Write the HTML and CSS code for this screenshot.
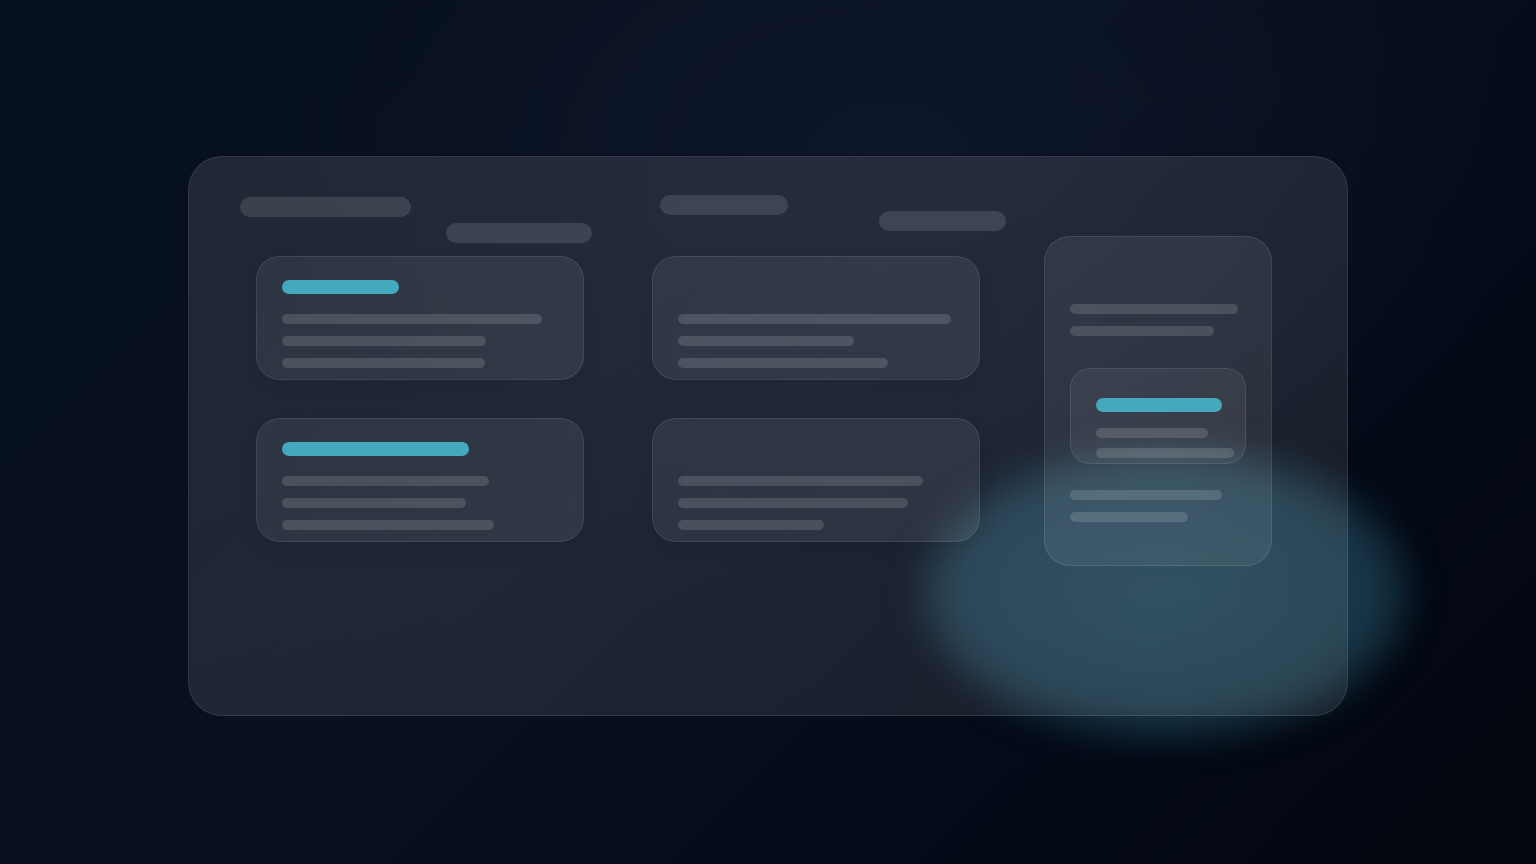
FILE: index.html
```html
<!DOCTYPE html>
<html lang="en">
<head>
<meta charset="utf-8">
<title>Dashboard skeleton</title>
<link rel="stylesheet" href="styles.css">
</head>
<body>
<div class="stage">
  <div class="glow"></div>
  <div class="panel">
    <div class="main-col">
      <div class="header">
        <span class="hbar hb1"></span>
        <span class="hbar hb2"></span>
        <span class="hbar hb3"></span>
        <span class="hbar hb4"></span>
      </div>
      <div class="cards">
        <div class="card">
          <span class="accent" style="width:117px"></span>
          <span class="line" style="width:260px"></span>
          <span class="line" style="width:204px"></span>
          <span class="line" style="width:203px"></span>
        </div>
        <div class="card">
          <span class="accent blank" style="width:117px"></span>
          <span class="line" style="width:273px"></span>
          <span class="line" style="width:176px"></span>
          <span class="line" style="width:210px"></span>
        </div>
        <div class="card">
          <span class="accent" style="width:187px"></span>
          <span class="line" style="width:207px"></span>
          <span class="line" style="width:184px"></span>
          <span class="line" style="width:212px"></span>
        </div>
        <div class="card">
          <span class="accent blank" style="width:117px"></span>
          <span class="line" style="width:245px"></span>
          <span class="line" style="width:230px"></span>
          <span class="line" style="width:146px"></span>
        </div>
      </div>
    </div>
    <aside class="side">
      <span class="line" style="width:168px"></span>
      <span class="line" style="width:144px"></span>
      <div class="inner">
        <span class="accent" style="width:126px"></span>
        <span class="line" style="width:112px"></span>
        <span class="line" style="width:138px"></span>
      </div>
      <span class="line" style="width:152px"></span>
      <span class="line" style="width:118px"></span>
    </aside>
  </div>
</div>
</body>
</html>
```
FILE: styles.css
```css
* { box-sizing: border-box; }

html, body {
  margin: 0;
  height: 100%;
}

body {
  font-family: "Inter", "Liberation Sans", sans-serif;
  background:
    radial-gradient(ellipse 900px 600px at 58% 18%, rgba(14, 22, 42, 0.9), rgba(14, 22, 42, 0) 70%),
    linear-gradient(135deg, #07101e 0%, #081022 45%, #040a17 75%, #02060e 100%);
  overflow: hidden;
}

.stage {
  position: relative;
  width: 1536px;
  height: 864px;
  padding: 156px 0 0 188px;
}

.glow {
  position: absolute;
  left: 925px;
  top: 450px;
  width: 480px;
  height: 285px;
  border-radius: 50%;
  background: radial-gradient(ellipse at 50% 50%, rgba(46, 100, 122, 0.6) 0%, rgba(42, 94, 116, 0.55) 55%, rgba(36, 86, 106, 0.4) 80%, rgba(30, 80, 100, 0) 100%);
  filter: blur(18px);
}

.panel {
  position: relative;
  width: 1160px;
  height: 560px;
  border-radius: 34px;
  border: 1px solid rgba(255, 255, 255, 0.09);
  background: linear-gradient(160deg, rgba(255, 255, 255, 0.1) 0%, rgba(255, 255, 255, 0.095) 50%, rgba(255, 255, 255, 0.085) 100%);
  display: flex;
  align-items: flex-start;
}

.main-col {
  width: 792px;
  flex-shrink: 0;
  padding-top: 38px;
}

.header {
  display: flex;
  align-items: flex-start;
  height: 48px;
}

.hbar {
  flex-shrink: 0;
  display: block;
  height: 20px;
  border-radius: 10px;
  background: rgba(255, 255, 255, 0.12);
}

.hb1 { width: 171px; margin-left: 51px; margin-top: 2px; }
.hb2 { width: 146px; margin-left: 35px; margin-top: 28px; }
.hb3 { width: 128px; margin-left: 68px; margin-top: 0; }
.hb4 { width: 127px; margin-left: 91px; margin-top: 16px; }

.cards {
  margin-top: 13px;
  margin-left: 67px;
  display: grid;
  grid-template-columns: 328px 328px;
  grid-auto-rows: 124px;
  column-gap: 68px;
  row-gap: 38px;
}

.card {
  display: flex;
  flex-direction: column;
  align-items: flex-start;
  gap: 12px;
  padding: 23px 25px 0;
  border-radius: 24px;
  border: 1px solid rgba(255, 255, 255, 0.09);
  background: linear-gradient(120deg, rgba(255, 255, 255, 0.065), rgba(255, 255, 255, 0.08));
  box-shadow: 0 6px 18px rgba(0, 0, 0, 0.08);
}

.accent {
  flex-shrink: 0;
  display: block;
  height: 14px;
  border-radius: 7px;
  background: #44a9bc;
  margin-bottom: 8px;
}

.accent.blank { background: transparent; }

.line {
  flex-shrink: 0;
  display: block;
  height: 10px;
  border-radius: 5px;
  background: rgba(255, 255, 255, 0.14);
}

.side {
  flex-shrink: 0;
  margin-left: 63px;
  margin-top: 79px;
  width: 228px;
  height: 330px;
  border-radius: 26px;
  border: 1px solid rgba(255, 255, 255, 0.1);
  background: rgba(255, 255, 255, 0.07);
  padding: 67px 25px 0;
  display: flex;
  flex-direction: column;
  align-items: flex-start;
  gap: 12px;
}

.inner {
  flex-shrink: 0;
  margin-top: 20px;
  margin-bottom: 14px;
  width: 176px;
  height: 96px;
  border-radius: 20px;
  border: 1px solid rgba(255, 255, 255, 0.09);
  background: rgba(255, 255, 255, 0.06);
  padding: 29px 25px 0;
  display: flex;
  flex-direction: column;
  align-items: flex-start;
}

.inner .accent { margin-bottom: 16px; }
.inner .line + .line { margin-top: 10px; }
```
